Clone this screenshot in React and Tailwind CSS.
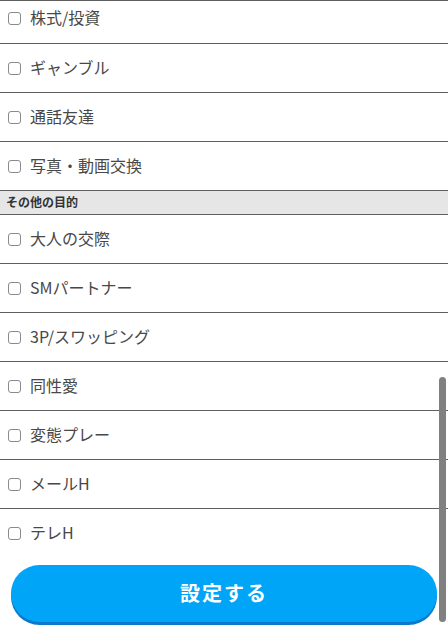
import { useState } from 'react'

const topItems = ['株式/投資', 'ギャンブル', '通話友達', '写真・動画交換']
const otherItems = ['大人の交際', 'SMパートナー', '3P/スワッピング', '同性愛', '変態プレー', 'メールH', 'テレH']

function Row({ label, checked, onToggle, last, first }) {
  return (
    <label
      className={`flex items-center gap-[9px] px-[8px] cursor-pointer ${
        first ? 'h-[43px] pb-[7px]' : 'h-[49px]'
      } ${last ? '' : 'border-b border-[#5f5f5f]'}`}
    >
      <input
        type="checkbox"
        checked={checked}
        onChange={onToggle}
        className="appearance-none m-0 w-[13px] h-[13px] shrink-0 rounded-[3px] border border-[#8a8a8a] bg-white checked:bg-[#00a5f8] checked:border-[#00a5f8]"
      />
      <span className="text-[16px] leading-none pb-[3px] text-[#484848]">{label}</span>
    </label>
  )
}

export default function App() {
  const [checked, setChecked] = useState({})
  const toggle = (k) => setChecked((prev) => ({ ...prev, [k]: !prev[k] }))

  return (
    <div
      className="relative w-[448px] h-[639px] overflow-hidden bg-white"
      style={{ fontFamily: '"Noto Sans CJK JP", "Noto Sans", sans-serif' }}
    >
      <div className="border-t border-[#5f5f5f]">
        {topItems.map((t, i) => (
          <Row key={t} label={t} first={i === 0} checked={!!checked[t]} onToggle={() => toggle(t)} />
        ))}
        {/* section header */}
        <div className="h-[24px] bg-[#e6e6e6] border-b border-[#5f5f5f] flex items-center px-[6px]">
          <span className="text-[12px] leading-none pb-[2px] font-bold text-[#333]">その他の目的</span>
        </div>
        {otherItems.map((t, i) => (
          <Row
            key={t}
            label={t}
            last={i === otherItems.length - 1}
            checked={!!checked[t]}
            onToggle={() => toggle(t)}
          />
        ))}
      </div>

      <div className="px-[11px] pt-[7px]">
        <button className="w-[426px] h-[57px] rounded-full bg-[#00a5f8] shadow-[0_3px_0_#0a7bcc] text-white text-[20px] leading-none pb-[2px] font-bold tracking-[2px] flex items-center justify-center">
          設定する
        </button>
      </div>

      {/* overlay scroll indicator */}
      <div className="absolute right-[2px] top-[377px] w-[7px] h-[245px] rounded-full bg-[#808080]" />
    </div>
  )
}
